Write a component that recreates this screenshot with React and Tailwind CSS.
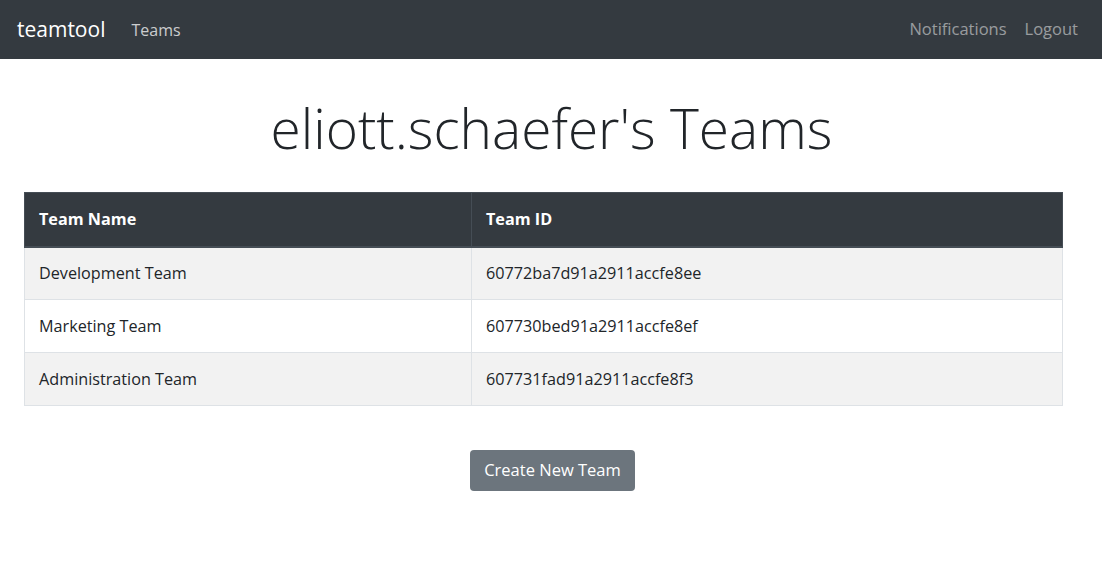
export default function App() {
  const rows = [
    ["Development Team", "60772ba7d91a2911accfe8ee"],
    ["Marketing Team", "607730bed91a2911accfe8ef"],
    ["Administration Team", "607731fad91a2911accfe8f3"],
  ];
  return (
    <div className="min-h-[570px] bg-white text-[#212529]" style={{ fontFamily: '"Open Sans", "Noto Sans", sans-serif' }}>
      <nav className="h-[59px] bg-[#343a40] pl-[17px] pr-[24px] flex items-center">
        <span className="text-[21px] text-white mr-[26px] leading-none">teamtool</span>
        <span className="text-[16px] text-white/75">Teams</span>
        <div className="ml-auto flex gap-[18px] text-[16.5px] text-white/50">
          <span>Notifications</span>
          <span>Logout</span>
        </div>
      </nav>
      <main className="pl-[24px] pr-[39px]">
        <h1 className="text-center font-light text-[55px] leading-[1.2] pt-[36px] pb-[31px] pl-[16px]">eliott.schaefer's Teams</h1>
        <table className="w-full border-collapse text-[16.2px]">
          <thead>
            <tr className="bg-[#343a40] text-white">
              <th className="h-[54px] text-left font-bold px-[14px] border border-[#454d55] border-b-2 w-[447px]">Team Name</th>
              <th className="h-[54px] text-left font-bold px-[14px] border border-[#454d55] border-b-2">Team ID</th>
            </tr>
          </thead>
          <tbody>
            {rows.map((r, i) => (
              <tr key={i} className={i % 2 === 0 ? "bg-[#f2f2f2]" : "bg-white"}>
                <td className="h-[53px] px-[14px] border border-[#dee2e6]">{r[0]}</td>
                <td className="h-[53px] px-[14px] border border-[#dee2e6]">{r[1]}</td>
              </tr>
            ))}
          </tbody>
        </table>
        <div className="flex justify-center mt-[44px] pl-[18px]">
          <button className="h-[41px] px-[14px] rounded-[4px] bg-[#6c757d] text-white text-[16.5px]">Create New Team</button>
        </div>
      </main>
    </div>
  );
}
